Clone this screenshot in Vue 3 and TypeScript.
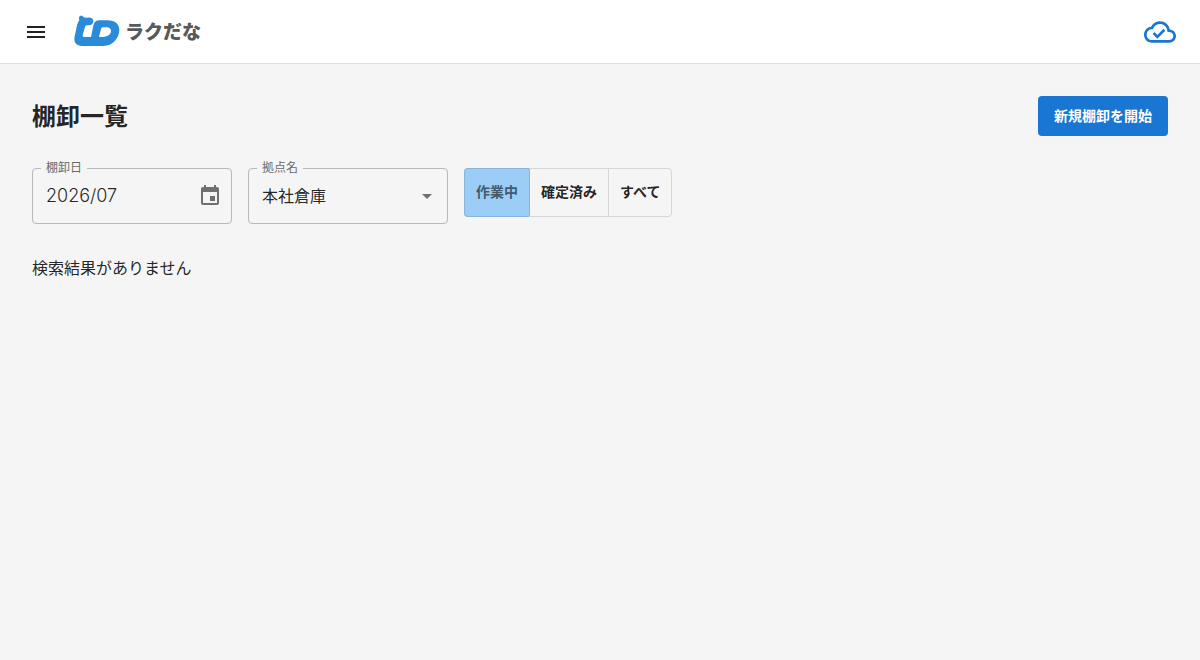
<script setup lang="ts">
import { ref } from 'vue'

interface StatusOption {
  value: string
  label: string
}

const statuses: StatusOption[] = [
  { value: 'working', label: '作業中' },
  { value: 'fixed', label: '確定済み' },
  { value: 'all', label: 'すべて' },
]

const status = ref('working')
const month = ref('2026/07')
const site = ref('本社倉庫')
</script>

<template>
  <div class="page">
    <header class="app-bar">
      <button class="icon-button" type="button" aria-label="メニュー">
        <svg width="24" height="24" viewBox="0 0 24 24"><path d="M3 18h18v-2H3v2zm0-5h18v-2H3v2zm0-7v2h18V6H3z" /></svg>
      </button>
      <a class="brand" href="#">
        <svg class="brand-mark" width="46" height="31" viewBox="192 45 138 93" aria-hidden="true">
          <path
            fill-rule="evenodd"
            d="M208 60Q204 49 212 47Q217 46 221 52Q226 54 231 53C243 50 250 56 250 63C250 71 244 76 236 76H231Q226 77 225 81L218 106Q217 111 222 111H243L250 77Q253 61 269 61H292C316 61 328 73 328 91C327 116 307 138 280 138H220C199 138 190 127 194 109L201 76Q203 66 208 60ZM278 82Q274 82 273 87L267 111H279C294 110 303 103 303 94Q303 83 291 82Z"
          />
        </svg>
        <span class="brand-name">ラクだな</span>
      </a>
      <svg class="sync" width="32" height="32" viewBox="0 0 24 24" role="img" aria-label="同期済み">
        <path d="M19.35 10.04C18.67 6.59 15.64 4 12 4 9.11 4 6.61 5.64 5.36 8.04 2.35 8.36 0 10.9 0 14c0 3.31 2.69 6 6 6h13c2.76 0 5-2.24 5-5 0-2.64-2.05-4.78-4.65-4.96zM19 18H6c-2.21 0-4-1.79-4-4 0-2.05 1.53-3.76 3.56-3.97l1.07-.11.5-.95C8.08 7.14 9.94 6 12 6c2.62 0 4.88 1.86 5.39 4.43l.3 1.5 1.53.11c1.56.1 2.78 1.41 2.78 2.96 0 1.65-1.35 3-3 3zm-9-3.82l-2.09-2.09L6.5 13.5 10 17l6.01-6.01-1.41-1.41z" />
      </svg>
    </header>

    <main class="content">
      <div class="title-row">
        <h1>棚卸一覧</h1>
        <button class="primary" type="button">新規棚卸を開始</button>
      </div>

      <div class="filters">
        <div class="field">
          <label for="month">棚卸日</label>
          <input id="month" v-model="month" class="month" type="text" />
          <button class="calendar" type="button" aria-label="日付を選択">
            <svg width="24" height="24" viewBox="0 0 24 24"><path d="M17 12h-5v5h5v-5zM16 1v2H8V1H6v2H5c-1.11 0-1.99.9-1.99 2L3 19c0 1.1.89 2 2 2h14c1.1 0 2-.9 2-2V5c0-1.1-.9-2-2-2h-1V1h-2zm3 18H5V8h14v11z" /></svg>
          </button>
        </div>

        <div class="field">
          <label for="site">拠点名</label>
          <select id="site" v-model="site">
            <option>本社倉庫</option>
          </select>
          <svg class="arrow" width="24" height="24" viewBox="0 0 24 24" aria-hidden="true"><path d="M7 10l5 5 5-5z" /></svg>
        </div>

        <div class="toggle" role="group" aria-label="状態">
          <button
            v-for="option in statuses"
            :key="option.value"
            type="button"
            :class="{ selected: status === option.value }"
            :aria-pressed="status === option.value"
            @click="status = option.value"
          >{{ option.label }}</button>
        </div>
      </div>

      <p class="empty">検索結果がありません</p>
    </main>
  </div>
</template>

<style>
body {
  margin: 0;
  background: #f5f5f5;
}
</style>

<style scoped>
.page {
  min-height: 100vh;
  background: #f5f5f5;
  color: rgba(0, 0, 0, 0.87);
  font-family: "Noto Sans CJK JP", sans-serif;
  font-size: 16px;
  line-height: 24px;
}

.page * {
  box-sizing: border-box;
}

button,
input,
select {
  margin: 0;
  border: 0;
  background: none;
  color: inherit;
  font: inherit;
}

button {
  cursor: pointer;
}

svg {
  display: block;
  fill: currentColor;
}

.app-bar {
  display: flex;
  align-items: center;
  height: 64px;
  padding: 0 24px 0 16px;
  background: #fff;
  border-bottom: 1px solid #e0e0e0;
}

.icon-button {
  padding: 8px;
}

.brand {
  display: flex;
  align-items: center;
  gap: 5px;
  margin-left: 18px;
  padding-bottom: 2px;
  color: #595959;
  text-decoration: none;
}

.brand-mark {
  color: #2a8bdb;
}

.brand-name {
  font-size: 19px;
  font-weight: 900;
}

.sync {
  margin-left: auto;
  color: #1976d2;
}

.content {
  padding: 32px;
}

.title-row {
  display: flex;
  align-items: center;
  justify-content: space-between;
}

h1 {
  margin: 0;
  padding-bottom: 2px;
  font-size: 24px;
  font-weight: 700;
  line-height: 36px;
}

.primary {
  height: 40px;
  padding: 0 16px 2px;
  border-radius: 4px;
  background: #1976d2;
  color: #fff;
  font-size: 14px;
  font-weight: 700;
}

.filters {
  display: flex;
  align-items: flex-start;
  gap: 16px;
  margin-top: 32px;
}

.field {
  position: relative;
  display: flex;
  align-items: center;
  width: 200px;
  height: 56px;
  border: 1px solid #b9b9b9;
  border-radius: 4px;
}

.field label {
  position: absolute;
  top: -12px;
  left: 8px;
  padding: 0 5px;
  background: #f5f5f5;
  color: #6b6b6b;
  font-size: 12px;
  line-height: 20px;
}

.field input,
.field select {
  flex: 1;
  min-width: 0;
  height: 100%;
  padding: 0 13px 2px;
  appearance: none;
}

.field .month {
  font-family: Inter, "Noto Sans CJK JP", sans-serif;
  font-size: 18px;
  font-weight: 300;
}

.calendar {
  padding: 0 9px 0 0;
  color: #707070;
}

.arrow {
  position: absolute;
  right: 8px;
  color: #707070;
  pointer-events: none;
}

.toggle {
  display: flex;
  border: 1px solid #d6d6d6;
  border-radius: 4px;
}

.toggle button {
  height: 47px;
  padding: 0 11px 4px;
  font-size: 14px;
  font-weight: 700;
}

.toggle button + button {
  border-left: 1px solid #d6d6d6;
}

.toggle .selected {
  margin: -1px 0 -1px -1px;
  height: 49px;
  border: 1px solid #88b5d9;
  border-right: 0;
  border-radius: 4px 0 0 4px;
  background: #9bcdf6;
  color: #435a6d;
}

.toggle .selected + button {
  border-left-color: #88b5d9;
}

.empty {
  margin: 31px 0 0;
}
</style>
